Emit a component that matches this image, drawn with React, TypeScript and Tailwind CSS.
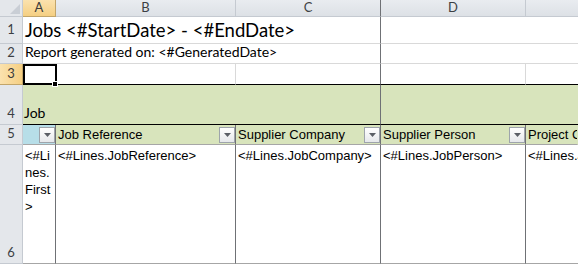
import React from 'react';

const calibri = { fontFamily: 'Lato, "Open Sans", sans-serif' };

function FilterButton() {
    return (
        <div className="w-4 h-4 border border-[#9ea4ab] bg-gradient-to-b from-white to-[#e6e8eb] flex items-center justify-center shrink-0">
            <svg width="7" height="4" viewBox="0 0 7 4">
                <polygon points="0,0 7,0 3.5,4" fill="#5b5f66" />
            </svg>
        </div>
    );
}

function ColHeader({ label, selected, last }: { label: string; selected?: boolean; last?: boolean }) {
    return (
        <div
            className={`flex items-center justify-center text-[13px] border-b ${last ? '' : 'border-r'} ${
                selected
                    ? 'bg-gradient-to-b from-[#fbe2ae] to-[#f5cf82] border-[#c2a56a] text-[#3b3b3b]'
                    : 'bg-gradient-to-b from-[#e9ecf0] to-[#dde1e6] border-[#c5cad1] text-[#3c3f44]'
            }`}
            style={calibri}
        >
            {label}
        </div>
    );
}

function RowHeader({ n, selected, center }: { n: number; selected?: boolean; center?: boolean }) {
    return (
        <div
            className={`flex ${center ? 'items-center' : 'items-end'} justify-center pb-[1px] text-[13px] border-r border-b ${
                selected
                    ? 'bg-gradient-to-r from-[#fbe2ae] to-[#f5cf82] border-[#c2a56a] text-[#3b3b3b]'
                    : 'bg-[#e4e7eb] border-[#c5cad1] text-[#3c3f44]'
            }`}
            style={calibri}
        >
            {n}
        </div>
    );
}

export default function App() {
    return (
        <div className="w-[578px] h-[264px] overflow-hidden bg-white">
            <div className="grid grid-cols-[23px_33px_180px_145px_145px_52px] grid-rows-[17px_27px_20px_21px_40px_20px_119px]">
                {/* Column headers */}
                <div className="bg-[#e4e7eb] border-r border-b border-[#c5cad1] relative">
                    <svg className="absolute right-[2px] bottom-[2px]" width="10" height="10" viewBox="0 0 10 10">
                        <polygon points="10,0 10,10 0,10" fill="#c9ced5" />
                    </svg>
                </div>
                <ColHeader label="A" selected />
                <ColHeader label="B" />
                <div className="flex items-center justify-center text-[13px] border-b border-r border-r-[#6f7175] border-b-[#c5cad1] bg-gradient-to-b from-[#e9ecf0] to-[#dde1e6] text-[#3c3f44]" style={calibri}>C</div>
                <ColHeader label="D" />
                <ColHeader label="" last />

                {/* Row 1 */}
                <RowHeader n={1} center />
                <div className="col-span-3 border-r border-[#6f7175] border-b border-b-[#d9d9d9] flex items-center pl-[2px] pt-[1px] text-[18.5px] text-black whitespace-nowrap" style={calibri}>
                    Jobs &lt;#StartDate&gt; - &lt;#EndDate&gt;
                </div>
                <div className="col-span-2 border-b border-[#d9d9d9]" />

                {/* Row 2 */}
                <RowHeader n={2} />
                <div className="col-span-3 border-r border-[#6f7175] border-b border-b-[#d9d9d9] flex items-end pb-[1px] pl-[2px] text-[14px] text-black whitespace-nowrap" style={calibri}>
                    Report generated on: &lt;#GeneratedDate&gt;
                </div>
                <div className="col-span-2 border-b border-[#d9d9d9]" />

                {/* Row 3 */}
                <RowHeader n={3} selected />
                <div className="relative border-b border-black">
                    <div className="absolute left-0 top-0 w-[34px] h-[21px] border-2 border-black" />
                    <div className="absolute left-[29px] top-[17px] w-[6px] h-[6px] bg-black border border-white" />
                </div>
                <div className="border-r border-[#d9d9d9] border-b border-b-black" />
                <div className="border-r border-[#6f7175] border-b border-b-black" />
                <div className="border-r border-[#d9d9d9] border-b border-b-black" />
                <div className="border-b border-black" />

                {/* Row 4 */}
                <RowHeader n={4} />
                <div className="col-span-3 bg-[#d8e4bc] border-r border-[#6f7175] border-b border-b-black flex items-end pl-[1px] pb-[1px] text-[14px] text-black" style={calibri}>
                    Job
                </div>
                <div className="col-span-2 bg-[#d8e4bc] border-b border-black" />

                {/* Row 5 */}
                <RowHeader n={5} />
                {[
                    { label: '', bg: 'bg-[#b7dee8]', border: 'border-[#6f7175]' },
                    { label: 'Job Reference', bg: 'bg-[#d8e4bc]', border: 'border-[#6f7175]' },
                    { label: 'Supplier Company', bg: 'bg-[#d8e4bc]', border: 'border-[#6f7175]' },
                    { label: 'Supplier Person', bg: 'bg-[#d8e4bc]', border: 'border-[#6f7175]' },
                    { label: 'Project Code', bg: 'bg-[#d8e4bc]', border: 'border-transparent' },
                ].map((c, i) => (
                    <div
                        key={i}
                        className={`${c.bg} border-r ${c.border} border-b border-b-[#a6a6a6] flex items-center justify-between pl-[2px] overflow-hidden whitespace-nowrap text-[13px] text-black`}
                        style={{ fontFamily: '"Liberation Sans", Arial, sans-serif' }}
                    >
                        <span>{c.label}</span>
                        {i < 4 && <FilterButton />}
                    </div>
                ))}

                {/* Row 6 */}
                <RowHeader n={6} />
                {[
                    '',
                    '<#Lines.JobReference>',
                    '<#Lines.JobCompany>',
                    '<#Lines.JobPerson>',
                    '<#Lines.JobProject>',
                ].map((t, i) => (
                    <div
                        key={i}
                        className={`border-b border-[#a6a6a6] ${i < 4 ? 'border-r border-r-[#6f7175]' : ''} pl-[2px] pt-[2px] text-[13px] leading-[17px] text-black whitespace-nowrap overflow-hidden`}
                        style={{ fontFamily: '"Liberation Sans", Arial, sans-serif' }}
                    >
                        {i === 0 ? (
                            <>
                                &lt;#Li
                                <br />
                                nes.
                                <br />
                                First
                                <br />
                                &gt;
                            </>
                        ) : (
                            t
                        )}
                    </div>
                ))}
            </div>
        </div>
    );
}
